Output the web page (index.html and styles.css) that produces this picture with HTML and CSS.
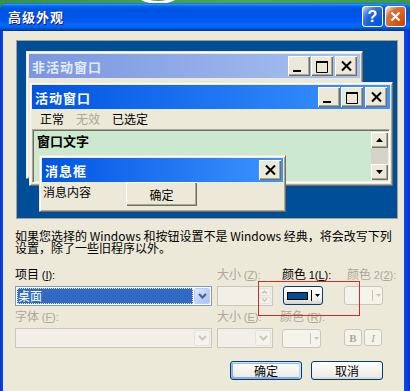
FILE: index.html
```html
<!DOCTYPE html>
<html lang="zh-CN">
<head>
<meta charset="utf-8">
<title>高级外观</title>
<link rel="stylesheet" href="styles.css">
</head>
<body>
<div class="screen">
  <div class="ring"></div>
  <div class="dialog">
    <div class="titlebar">
      <span class="title">高级外观</span>
      <div class="tb-btns">
        <span class="tb-btn help">?</span>
        <span class="tb-btn close"><svg width="11" height="11" viewBox="0 0 11 11"><path d="M1.5 1.5l8 8M9.5 1.5l-8 8" stroke="#fff" stroke-width="2.2" fill="none"/></svg></span>
      </div>
    </div>
    <div class="body">
      <div class="preview">
        <div class="win inactive">
          <div class="cap cap-inactive">
            <span>非活动窗口</span>
            <div class="cbtns">
              <span class="cbtn"><svg width="22" height="20" viewBox="0 0 22 20"><rect x="5" y="14" width="8" height="2"/></svg></span>
              <span class="cbtn"><svg width="22" height="20" viewBox="0 0 22 20"><path d="M5.5 5.5h11v11h-11z" fill="none" stroke="#000"/><rect x="5" y="5" width="12" height="2"/></svg></span>
              <span class="cbtn cx"><svg width="22" height="20" viewBox="0 0 22 20"><path d="M7 5.5l9 9M16 5.5l-9 9" stroke="#000" stroke-width="2" fill="none"/></svg></span>
            </div>
          </div>
        </div>
        <div class="win active">
          <div class="cap cap-active">
            <span>活动窗口</span>
            <div class="cbtns">
              <span class="cbtn"><svg width="22" height="20" viewBox="0 0 22 20"><rect x="5" y="14" width="8" height="2"/></svg></span>
              <span class="cbtn"><svg width="22" height="20" viewBox="0 0 22 20"><path d="M5.5 5.5h11v11h-11z" fill="none" stroke="#000"/><rect x="5" y="5" width="12" height="2"/></svg></span>
              <span class="cbtn cx"><svg width="22" height="20" viewBox="0 0 22 20"><path d="M7 5.5l9 9M16 5.5l-9 9" stroke="#000" stroke-width="2" fill="none"/></svg></span>
            </div>
          </div>
          <div class="menu">
            <span class="mi">正常</span>
            <span class="mi mi-dis">无效</span>
            <span class="mi">已选定</span>
          </div>
          <div class="client">
            <div class="wtext">窗口文字</div>
            <div class="sbar">
              <span class="sbtn"><svg width="7" height="4" viewBox="0 0 7 4"><path d="M3.5 0L7 4H0z"/></svg></span>
              <span class="sbtn"><svg width="7" height="4" viewBox="0 0 7 4"><path d="M0 0h7L3.5 4z"/></svg></span>
            </div>
          </div>
        </div>
        <div class="win msgbox">
          <div class="cap cap-active">
            <span>消息框</span>
            <div class="cbtns">
              <span class="cbtn"><svg width="22" height="20" viewBox="0 0 22 20"><path d="M7 5.5l9 9M16 5.5l-9 9" stroke="#000" stroke-width="2" fill="none"/></svg></span>
            </div>
          </div>
          <div class="mbody">
            <span class="mtext">消息内容</span>
            <span class="mbtn">确定</span>
          </div>
        </div>
      </div>

      <p class="note">如果您选择的 Windows 和按钮设置不是 Windows 经典，将会改写下列
设置，除了一些旧程序以外。</p>

      <div class="fields">
        <span class="lbl">项目 <span class="lat2">(<u>I</u>):</span></span>
        <span class="lbl dis">大小 <span class="lat2">(<u>Z</u>):</span></span>
        <span class="lbl">颜色 <span class="lat2">1(<u>L</u>):</span></span>
        <span class="lbl dis c2">颜色 <span class="lat2">2(<u>2</u>):</span></span>

        <div class="combo wide">
          <span class="val">桌面</span>
          <span class="drop"><svg width="9" height="6" viewBox="0 0 9 6"><path d="M1 1l3.5 3.5L8 1" fill="none" stroke="#4D6185" stroke-width="2"/></svg></span>
        </div>
        <div class="spin">
          <span class="sp-field"></span>
          <span class="sp-btns">
            <span class="sp-b"><svg width="7" height="4" viewBox="0 0 7 4"><path d="M1 3.5l2.5-2.5L6 3.5" fill="none" stroke="#C9C7BA" stroke-width="1.5"/></svg></span>
            <span class="sp-b"><svg width="7" height="4" viewBox="0 0 7 4"><path d="M1 0.5l2.5 2.5L6 0.5" fill="none" stroke="#C9C7BA" stroke-width="1.5"/></svg></span>
          </span>
        </div>
        <div class="colorbtn c1">
          <span class="swatch"></span>
          <span class="sep"></span>
          <svg class="tri" width="5" height="3" viewBox="0 0 5 3"><path d="M0 0h5L2.5 3z"/></svg>
        </div>
        <div class="colorbtn dis">
          <span class="swatch-slot"></span>
          <span class="sep"></span>
          <svg class="tri" width="5" height="3" viewBox="0 0 5 3"><path d="M0 0h5L2.5 3z"/></svg>
        </div>

        <span class="lbl dis">字体 <span class="lat2">(<u>F</u>):</span></span>
        <span class="lbl dis">大小 <span class="lat2">(<u>E</u>):</span></span>
        <span class="lbl dis lr">颜色 <span class="lat2">(<u>R</u>):</span></span>
        <span></span>

        <div class="combo wide dis">
          <span class="val"></span>
          <span class="drop"><svg width="9" height="6" viewBox="0 0 9 6"><path d="M1 1l3.5 3.5L8 1" fill="none" stroke="#C9C7BA" stroke-width="2"/></svg></span>
        </div>
        <div class="combo small dis">
          <span class="val"></span>
          <span class="drop"><svg width="9" height="6" viewBox="0 0 9 6"><path d="M1 1l3.5 3.5L8 1" fill="none" stroke="#C9C7BA" stroke-width="2"/></svg></span>
        </div>
        <div class="colorbtn dis c3">
          <span class="swatch-slot"></span>
          <span class="sep"></span>
          <svg class="tri" width="5" height="3" viewBox="0 0 5 3"><path d="M0 0h5L2.5 3z"/></svg>
        </div>
        <div class="bi">
          <span class="fmt bold">B</span>
          <span class="fmt ital">I</span>
        </div>
      </div>

      <div class="actions">
        <span class="btn default">确定</span>
        <span class="btn">取消</span>
      </div>
    </div>
  </div>
  <div class="mark"></div>
</div>
</body>
</html>
```

FILE: styles.css
```css
* { box-sizing: border-box; }
html, body { margin: 0; padding: 0; }
body {
  width: 410px;
  height: 391px;
  overflow: hidden;
  font-family: "Noto Sans CJK SC", "Liberation Sans", sans-serif;
  font-size: 12px;
  color: #000;
  background: #3E9B3A;
}
.screen {
  position: relative;
  width: 410px;
  height: 391px;
  padding-top: 3px;
  background: linear-gradient(90deg, #3A9338, #4FA845 60%, #3E9B3A);
  overflow: hidden;
}
.ring {
  position: absolute;
  left: 122px;
  top: -64px;
  width: 72px;
  height: 68px;
  border: 3px solid #fff;
  border-radius: 50%;
}
.dialog {
  position: relative;
  width: 410px;
  height: 388px;
  display: flex;
  flex-direction: column;
  background: linear-gradient(90deg, #0831D9, #0A58E8 1%, #0A58E8 98%, #0831D9);
  border-radius: 7px 7px 0 0;
}
.titlebar {
  height: 28px;
  flex: none;
  display: flex;
  align-items: center;
  padding: 1px 4px 2px 8px;
  border-radius: 7px 7px 0 0;
  background: linear-gradient(180deg, #0058EE 0%, #3593FF 4%, #288EFF 6%, #127DFF 8%, #036FFC 10%, #0262EE 14%, #0057E5 20%, #0054E3 24%, #0055EB 56%, #005BF5 66%, #026AFE 76%, #0062EF 86%, #0052D6 92%, #0040AB 96%, #003092 100%);
}
.title {
  color: #fff;
  font-weight: bold;
  font-size: 13px;
  letter-spacing: 1px;
  text-shadow: 1px 1px #0F1089;
}
.tb-btns {
  margin-left: auto;
  display: flex;
  gap: 2px;
}
.tb-btn {
  width: 21px;
  height: 21px;
  border: 1px solid #fff;
  border-radius: 3px;
  display: flex;
  align-items: center;
  justify-content: center;
}
.help {
  background: radial-gradient(circle at 90% 90%, #0054E9 0%, #2263D5 55%, #4479E4 70%, #A3BBEC 90%, #fff 100%);
  color: #fff;
  font-family: "Liberation Sans", sans-serif;
  font-weight: bold;
  font-size: 16px;
  line-height: 19px;
}
.close {
  background: radial-gradient(circle at 90% 90%, #CC4600 0%, #DC6527 55%, #CD7546 70%, #FFCCB2 90%, #fff 100%);
}
.body {
  flex: 1;
  margin: 0 6px 0 3px;
  background: #ECE9D8;
  padding: 9px 21px 0 12px;
}

/* preview */
.preview {
  position: relative;
  width: 382px;
  height: 179px;
  margin-left: 1px;
  border: 1px solid #A5A294;
  background: #004E98;
}
.win {
  position: absolute;
  display: flex;
  flex-direction: column;
  background: #ECE9D8;
  border: 1px solid;
  border-color: #ECE9D8 #716F64 #716F64 #ECE9D8;
  box-shadow: inset 1px 1px #fff, inset -1px -1px #ACA899;
  padding: 2px;
}
.inactive { left: 9px; top: 10px; width: 337px; height: 128px; }
.active { left: 12px; top: 41px; width: 364px; height: 104px; }
.msgbox { left: 22px; top: 114px; width: 247px; height: 57px; }

.cap {
  height: 24px;
  flex: none;
  display: flex;
  align-items: center;
  padding-left: 3px;
  color: #fff;
  font-weight: bold;
  font-size: 13px;
  letter-spacing: 1px;
}
.cap-inactive {
  background: linear-gradient(90deg, #7A96DF, #A9C2F1);
  color: #E4EBFA;
}
.cap-active {
  background: linear-gradient(90deg, #0054E3, #3D95FF);
}
.cbtns {
  margin-left: auto;
  margin-right: 3px;
  display: flex;
  gap: 1px;
}
.cbtn {
  width: 22px;
  height: 20px;
  display: block;
  background: #ECE9D8;
  box-shadow: inset 1px 1px #fff, inset -1px -1px #716F64, inset -2px -2px #ACA899;
}
.cbtn svg { display: block; }
.cbtn.cx { margin-left: 1px; }
.msgbox .cbtns { margin-right: 2px; }

.menu {
  height: 20px;
  flex: none;
  display: flex;
  align-items: center;
  padding-left: 2px;
  line-height: 14px;
}
.mi { padding: 0 6px; }
.mi-dis { color: #ACA899; }

.client {
  flex: 1;
  display: flex;
  background: #CCE8CF;
  border: 1px solid;
  border-color: #ACA899 #fff #fff #ACA899;
  box-shadow: inset 1px 1px #716F64, inset -1px -1px #F1EFE2;
}
.wtext {
  flex: 1;
  padding: 3px 0 0 4px;
  font-weight: bold;
  font-size: 13px;
  line-height: 16px;
}
.sbar {
  width: 17px;
  margin: 2px 1px 2px 0;
  display: flex;
  flex-direction: column;
  justify-content: space-between;
  background: #D6D3CA;
}
.sbtn {
  height: 16px;
  display: flex;
  align-items: center;
  justify-content: center;
  background: #ECE9D8;
  box-shadow: inset 1px 1px #fff, inset -1px -1px #716F64, inset -2px -2px #ACA899;
}

.mbody {
  flex: 1;
  display: flex;
  align-items: flex-start;
  padding-left: 1px;
}
.mtext { margin-top: 4px; line-height: 12px; }
.mbtn {
  margin-left: 35px;
  width: 71px;
  height: 24px;
  display: flex;
  align-items: center;
  justify-content: center;
  background: #ECE9D8;
  box-shadow: inset 1px 1px #fff, inset -1px -1px #716F64, inset -2px -2px #ACA899;
}

/* note */
.note {
  margin: 11px 0 0;
  height: 24px;
  white-space: pre-line;
  line-height: 12px;
  font-size: 12px;
  width: 380px;
}
.lat2 {
  font-family: "Liberation Sans", sans-serif;
  font-size: 11px;
}

/* fields */
.fields {
  margin-top: 14px;
  display: grid;
  grid-template-columns: 202px 65px 62px 39px;
  grid-template-rows: 18px 24px 18px 20px;
  align-items: start;
}
.lbl { line-height: 12px; white-space: nowrap; }
.dis { color: #ACA899; }
.lbl.c2 { margin-left: 3px; }
.lbl.lr { margin-left: -2px; }

.combo {
  height: 20px;
  display: flex;
  gap: 1px;
  padding: 1px;
  border: 1px solid #7F9DB9;
  background: #fff;
}
.combo.wide { width: 197px; }
.combo.small { width: 56px; }
.combo .val {
  flex: 1;
  line-height: 16px;
  padding-left: 1px;
}
.combo.wide:not(.dis) .val {
  background: #316AC5;
  color: #fff;
  outline: 1px dotted #F3E6A6;
  outline-offset: -1px;
}
.drop {
  width: 16px;
  display: flex;
  align-items: center;
  justify-content: center;
  border: 1px solid #BACCF8;
  border-radius: 2px;
  background: linear-gradient(135deg, #E2EBFE, #B9CDF9 60%, #AFC5F6);
}
.combo.dis {
  border-color: #C9C7BA;
  background: #F2F0E6;
}
.combo.dis .drop {
  border-color: #E6E4D8;
  background: #F4F3EE;
}

.spin {
  width: 56px;
  height: 20px;
  display: flex;
  border: 1px solid #C9C7BA;
  background: #F2F0E6;
  padding: 1px;
}
.sp-field { flex: 1; }
.sp-btns {
  width: 13px;
  display: flex;
  flex-direction: column;
  gap: 1px;
}
.sp-b {
  flex: 1;
  display: flex;
  align-items: center;
  justify-content: center;
  border: 1px solid #E6E4D8;
  border-radius: 2px;
  background: #F4F3EE;
}

.colorbtn {
  width: 39px;
  height: 19px;
  display: flex;
  align-items: center;
  border: 1px solid #003C74;
  border-radius: 3px;
  background: linear-gradient(180deg, #fff, #F2F1EC 70%, #D6D0C5);
}
.colorbtn.c1 { width: 40px; margin-left: 1px; }
.colorbtn.c3 { margin-top: 1px; }
.swatch, .swatch-slot {
  width: 21px;
  height: 8px;
  margin-left: 3px;
}
.swatch {
  border: 1px solid #000;
  background: #004E98;
}
.sep {
  width: 1px;
  height: 11px;
  margin-left: 3px;
  background: #000;
}
.tri { margin-left: 3px; fill: #000; }
.colorbtn.dis {
  border-color: #C9C7BA;
  background: #F5F4EA;
}
.colorbtn.dis .sep { background: #C9C7BA; }
.colorbtn.dis .tri { fill: #C9C7BA; }

.bi {
  display: flex;
  gap: 2px;
  margin-top: 1px;
}
.fmt {
  width: 18px;
  height: 17px;
  display: flex;
  align-items: center;
  justify-content: center;
  border: 1px solid #C9C7BA;
  border-radius: 3px;
  background: #F5F4EA;
  color: #ACA899;
  font-family: "Liberation Serif", serif;
  font-size: 11px;
}
.fmt.bold { font-weight: bold; }
.fmt.ital { font-style: italic; }

/* buttons */
.actions {
  margin-top: 13px;
  display: flex;
  justify-content: flex-end;
  gap: 9px;
}
.btn {
  width: 72px;
  height: 19px;
  display: flex;
  align-items: center;
  justify-content: center;
  border: 1px solid #003C74;
  border-radius: 3px;
  background: linear-gradient(180deg, #fff, #ECEBE6 86%, #D6D0C5);
  line-height: 14px;
}
.btn.default {
  box-shadow: inset -1px 1px #CEE7FF, inset 1px 2px #98B8EA, inset -2px 2px #BCD4F6, inset 1px -1px #89ADE4, inset 2px -2px #89ADE4;
}

.mark {
  position: absolute;
  left: 258px;
  top: 281px;
  width: 102px;
  height: 35px;
  border: 1px solid #D22A2A;
}
```
